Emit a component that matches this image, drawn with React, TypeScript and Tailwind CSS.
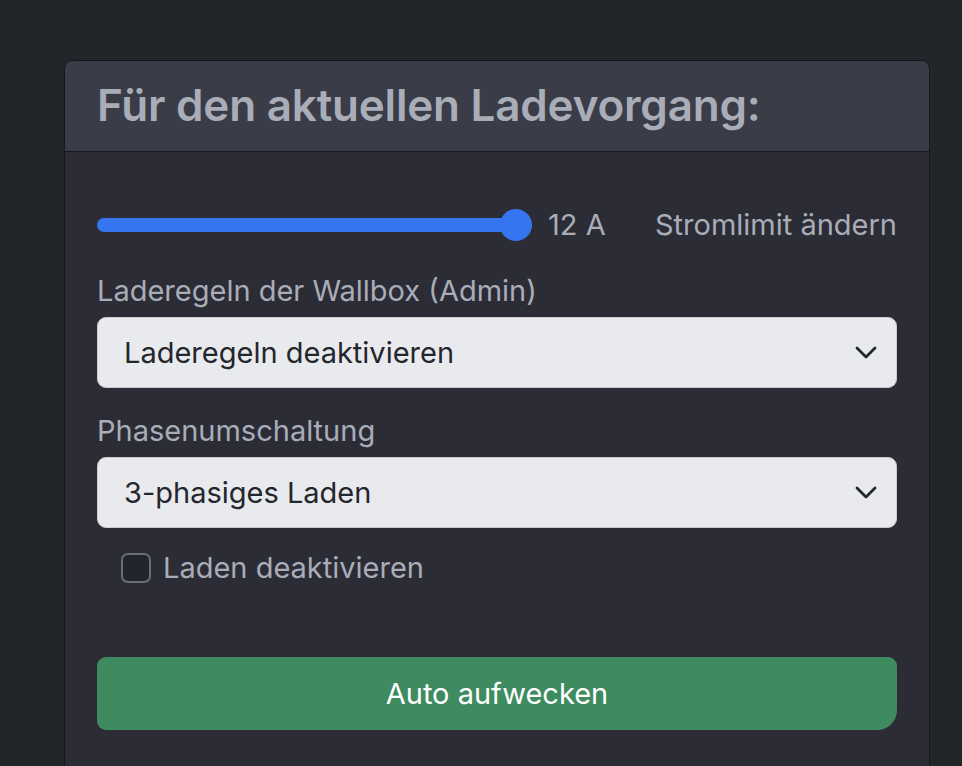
import React from "react";

const font = { fontFamily: "Inter, 'Noto Sans', 'Liberation Sans', sans-serif" };

function Chevron() {
  return (
    <svg width="22" height="13" viewBox="0 0 22 13" fill="none" className="shrink-0">
      <path d="M2 2l9 9 9-9" stroke="#25272e" strokeWidth="2.8" strokeLinecap="round" strokeLinejoin="round" />
    </svg>
  );
}

function SelectBox({ value }: { value: string }) {
  return (
    <div className="flex h-[71px] w-full items-center justify-between rounded-[9px] border border-[#c9cbd1] bg-[#e9eaee] pl-[26px] pr-[19px] text-[29px] text-[#24262d]">
      <span>{value}</span>
      <Chevron />
    </div>
  );
}

export default function App() {
  const current = 12;
  const pct = 100;

  return (
    <div className="min-h-screen w-full overflow-hidden bg-[#22252a] pl-[64px] pt-[60px]" style={font}>
      <div className="h-[720px] w-[866px] overflow-hidden rounded-t-[9px] border border-[#16171b] bg-[#2c2c36]">
        {/* Header */}
        <div className="flex h-[91px] items-center border-b border-[#18191e] bg-[#3a3c48] px-[32px] pb-[3px]">
          <h2 className="text-[44px] font-semibold tracking-[-0.2px] text-[#a9adb8]">Für den aktuellen Ladevorgang:</h2>
        </div>

        {/* Body */}
        <div className="px-[32px] pt-[57px]">
          {/* Slider row */}
          <div className="flex h-[32px] items-center">
            <div className="relative h-[32px] w-[435px]">
              <div className="absolute left-0 right-[16px] top-[9px] h-[14px] rounded-full bg-[#3575ef]" />
              <div
                className="absolute top-0 h-[32px] w-[32px] rounded-full bg-[#3575ef]"
                style={{ left: `calc(${pct}% - 32px)` }}
              />
            </div>
            <span className="ml-[16px] text-[29px] text-[#a9adb8]">{current} A</span>
            <span className="ml-auto text-[29px] text-[#a9adb8]">Stromlimit ändern</span>
          </div>

          <div className="mt-[32px] text-[29px] leading-[35px] text-[#a9adb8]">Laderegeln der Wallbox (Admin)</div>
          <div className="mt-[9px]">
            <SelectBox value="Laderegeln deaktivieren" />
          </div>

          <div className="mt-[25px] text-[29px] leading-[35px] text-[#a9adb8]">Phasenumschaltung</div>
          <div className="mt-[9px]">
            <SelectBox value="3-phasiges Laden" />
          </div>

          <label className="ml-[24px] mt-[22px] flex h-[35px] items-center gap-[12px]">
            <span className="h-[30px] w-[30px] rounded-[7px] border-2 border-[#6b6e78] bg-[#23252c]" />
            <span className="text-[29px] leading-[35px] text-[#a9adb8]">Laden deaktivieren</span>
          </label>

          <button className="mt-[72px] flex h-[73px] w-full items-center justify-center rounded-[9px] rounded-br-[20px] bg-[#3e8b5f] text-[29px] font-normal text-white">
            Auto aufwecken
          </button>
        </div>
      </div>
    </div>
  );
}
